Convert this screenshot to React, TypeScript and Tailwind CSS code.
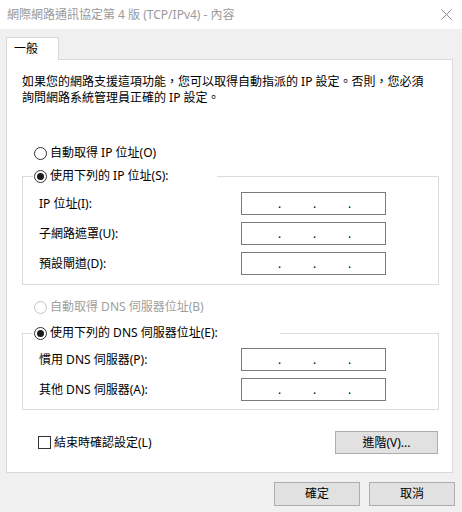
import React from "react";

const font = "font-['Noto_Sans','Noto_Sans_CJK_TC',sans-serif]";

function Radio({ checked, disabled }: { checked?: boolean; disabled?: boolean }) {
  return (
    <span
      className={`flex w-[13px] h-[13px] shrink-0 items-center justify-center rounded-full border bg-white ${
        disabled ? "border-[#c4c4c4]" : "border-[#333333]"
      }`}
    >
      {checked ? <span className="block w-[7px] h-[7px] rounded-full bg-[#1a1a1a]" /> : null}
    </span>
  );
}

function IpBox() {
  return (
    <div className="flex w-[145px] h-[23px] items-center border border-[#7a7a7a] bg-white pl-[36px] gap-[32px] text-[12px] leading-[16px] text-black">
      <span className="w-[3px]">.</span>
      <span className="w-[3px]">.</span>
      <span className="w-[3px]">.</span>
    </div>
  );
}

function Row({ label }: { label: string }) {
  return (
    <div className="flex h-[23px] items-center">
      <div className="w-[218px] pl-[16px] text-[12px] leading-[16px] text-black whitespace-nowrap">{label}</div>
      <IpBox />
    </div>
  );
}

function Button({ label, w }: { label: string; w: string }) {
  return (
    <div
      className={`flex ${w} items-center justify-center border border-[#adadad] bg-[#e1e1e1] text-[12px] leading-[16px] text-black`}
    >
      {label}
    </div>
  );
}

export default function App() {
  return (
    <div className={`w-[462px] h-[512px] bg-[#f0f0f0] flex flex-col ${font}`}>
      {/* title bar */}
      <div className="flex h-[29px] shrink-0 items-center justify-between bg-white pl-[7px] pr-[10px]">
        <span className="text-[12px] leading-[16px] text-[#9a9a9a] whitespace-nowrap">
          網際網路通訊協定第 4 版 (TCP/IPv4) - 內容
        </span>
        <svg width="11" height="11" viewBox="0 0 11 11" className="block">
          <path d="M0.5 0.5 L10.5 10.5 M10.5 0.5 L0.5 10.5" stroke="#8a8a8a" strokeWidth="1" />
        </svg>
      </div>

      {/* body */}
      <div className="flex flex-col pl-[6px] pt-[8px]">
        <div className="relative z-10 -mb-px flex w-[53px] h-[23px] items-center border border-b-0 border-[#d9d9d9] bg-white pl-[7px] text-[12px] leading-[16px] text-black">
          一般
        </div>
        <div className="flex w-[447px] h-[414px] flex-col border border-[#d9d9d9] bg-white">
          <p className="ml-[15px] mt-[14px] text-[12px] leading-[16px] text-black whitespace-nowrap">
            如果您的網路支援這項功能，您可以取得自動指派的 IP 設定。否則，您必須
            <br />
            詢問網路系統管理員正確的 IP 設定。
          </p>

          <div className="ml-[27px] mt-[39px] flex h-[16px] items-center gap-[3px] text-[12px] leading-[16px] text-black">
            <Radio />
            <span>自動取得 IP 位址(O)</span>
          </div>

          <fieldset className="ml-[15px] mt-[7px] w-[417px] border border-[#dcdcdc] p-0">
            <legend className="ml-[10px] flex w-[184px] h-[16px] items-center gap-[3px] pl-[1px] text-[12px] leading-[16px] text-black">
              <Radio checked />
              <span>使用下列的 IP 位址(S):</span>
            </legend>
            <div className="flex flex-col gap-[7px] pt-[8px] pb-[9px]">
              <Row label="IP 位址(I):" />
              <Row label="子網路遮罩(U):" />
              <Row label="預設閘道(D):" />
            </div>
          </fieldset>

          <div className="ml-[27px] mt-[14px] flex h-[16px] items-center gap-[3px] text-[12px] leading-[16px] text-[#a0a0a0]">
            <Radio disabled />
            <span>自動取得 DNS 伺服器位址(B)</span>
          </div>

          <fieldset className="ml-[15px] mt-[10px] w-[417px] border border-[#dcdcdc] p-0">
            <legend className="ml-[10px] flex w-[247px] h-[16px] items-center gap-[3px] pl-[1px] text-[12px] leading-[16px] text-black">
              <Radio checked />
              <span>使用下列的 DNS 伺服器位址(E):</span>
            </legend>
            <div className="flex flex-col gap-[7px] pt-[7px] pb-[8px]">
              <Row label="慣用 DNS 伺服器(P):" />
              <Row label="其他 DNS 伺服器(A):" />
            </div>
          </fieldset>

          <div className="ml-[15px] mt-[21px] flex w-[417px] h-[23px] items-center justify-between pr-[1px]">
            <div className="flex items-center gap-[3px] pl-[16px] text-[12px] leading-[16px] text-black">
              <span className="block w-[13px] h-[13px] border border-[#333333] bg-white" />
              <span>結束時確認設定(L)</span>
            </div>
            <Button label="進階(V)..." w="w-[103px] h-[23px]" />
          </div>
        </div>

        <div className="mt-[9px] flex justify-end gap-[9px] pr-[7px]">
          <Button label="確定" w="w-[86px] h-[24px]" />
          <Button label="取消" w="w-[86px] h-[24px]" />
        </div>
      </div>
    </div>
  );
}
